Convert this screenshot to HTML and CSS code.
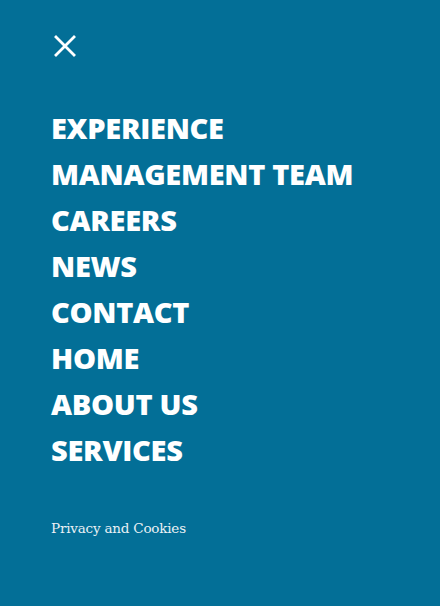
FILE: index.html
```html
<!DOCTYPE html>
<html>
<head>
<meta charset="utf-8">
<link rel="stylesheet" href="styles.css">
</head>
<body>
<div class="menu">
  <button class="close" aria-label="Close">
    <svg width="22" height="22" viewBox="0 0 22 22"><path d="M2 2L20 20M20 2L2 20" stroke="#fff" stroke-width="2.8" stroke-linecap="square"/></svg>
  </button>
  <nav class="nav">
    <a href="#">EXPERIENCE</a>
    <a href="#">MANAGEMENT TEAM</a>
    <a href="#">CAREERS</a>
    <a href="#">NEWS</a>
    <a href="#">CONTACT</a>
    <a href="#">HOME</a>
    <a href="#">ABOUT US</a>
    <a href="#">SERVICES</a>
  </nav>
  <a class="privacy" href="#">Privacy and Cookies</a>
</div>
</body>
</html>
```
FILE: styles.css
```css
html, body { margin: 0; padding: 0; }
body { background: #036f97; width: 440px; height: 606px; overflow: hidden; }
.menu { padding: 35px 0 0 51px; display: flex; flex-direction: column; align-items: flex-start; }
.close { background: none; border: 0; padding: 0; margin: 0 0 0 3px; width: 22px; height: 22px; display: block; cursor: pointer; }
.close svg { display: block; }
.nav { display: flex; flex-direction: column; margin-top: 48px; }
.nav a { font-family: "Open Sans", Roboto, sans-serif; font-weight: 800; font-size: 29px; line-height: 46px; color: #fff; text-decoration: none; letter-spacing: -0.3px; white-space: nowrap; }
.privacy { font-family: "DejaVu Serif", "Liberation Serif", serif; font-size: 13.5px; color: #eaf1f5; text-decoration: none; margin-top: 47px; letter-spacing: -0.2px; }
```
